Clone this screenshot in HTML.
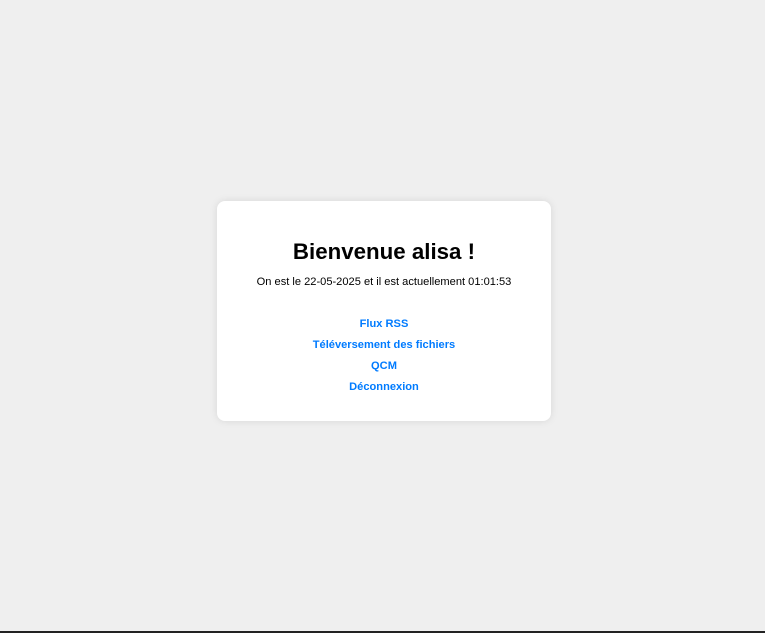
<!DOCTYPE html>
<html><head><style>
html,body{margin:0;padding:0}
body{width:765px;height:633px;background:#efefef;position:relative;font-family:"Liberation Sans",Arial,sans-serif;overflow:hidden}
.card{position:absolute;left:217px;top:201px;width:334px;height:220px;background:#fff;border-radius:8px;box-shadow:0 0 8px rgba(0,0,0,0.1);text-align:center}
h1{position:absolute;top:37px;left:0;right:0;margin:0;font-size:22.3px;line-height:28px;font-weight:bold;color:#000}
p{position:absolute;top:74px;left:0;right:0;margin:0;font-size:11.1px;line-height:14px;color:#000}
.l{position:absolute;left:0;right:0;font-size:11.1px;line-height:14px;font-weight:bold;color:#007bff;text-decoration:none}
.bar{position:absolute;left:0;right:0;bottom:0;height:2px;background:#222}
</style></head><body>
<div class="card">
<h1>Bienvenue alisa !</h1>
<p>On est le 22-05-2025 et il est actuellement 01:01:53</p>
<a class="l" style="top:116px">Flux RSS</a>
<a class="l" style="top:137px">Téléversement des fichiers</a>
<a class="l" style="top:158px">QCM</a>
<a class="l" style="top:179px">Déconnexion</a>
</div>
<div class="bar"></div>
</body></html>
